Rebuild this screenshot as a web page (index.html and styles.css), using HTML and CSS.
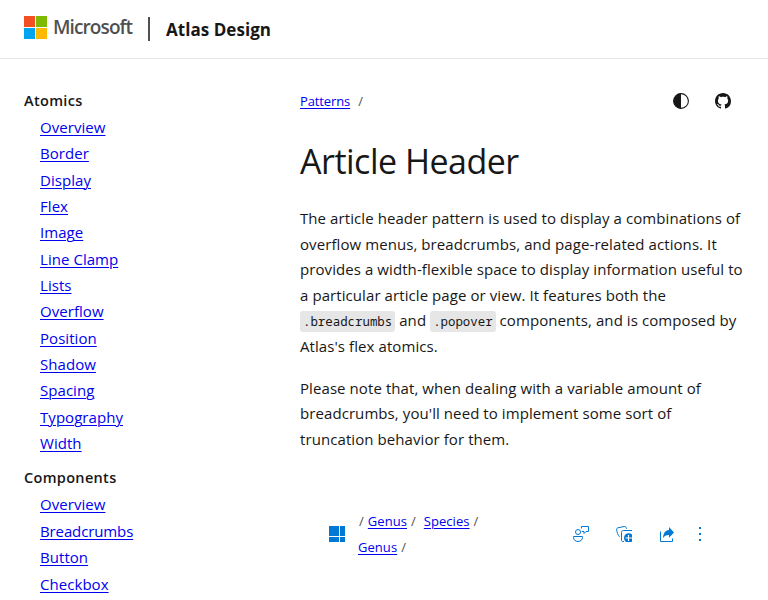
FILE: index.html
```html
<!DOCTYPE html>
<html lang="en">
<head>
<meta charset="utf-8">
<title>Article Header - Atlas Design</title>
<link rel="stylesheet" href="styles.css">
</head>
<body>
<header class="site-header">
  <a class="brand">
    <svg width="23" height="23" viewBox="0 0 23 23"><path fill="#f25022" d="M0 0h11v11H0z"/><path fill="#7fba00" d="M12 0h11v11H12z"/><path fill="#00a4ef" d="M0 12h11v11H0z"/><path fill="#ffb900" d="M12 12h11v11H12z"/></svg>
    <span class="brand-name">Microsoft</span>
  </a>
  <span class="divider"></span>
  <span class="site-name">Atlas Design</span>
</header>
<div class="layout">
  <nav class="sidebar">
    <h2>Atomics</h2>
    <ul>
      <li><a href="#">Overview</a></li>
      <li><a href="#">Border</a></li>
      <li><a href="#">Display</a></li>
      <li><a href="#">Flex</a></li>
      <li><a href="#">Image</a></li>
      <li><a href="#">Line Clamp</a></li>
      <li><a href="#">Lists</a></li>
      <li><a href="#">Overflow</a></li>
      <li><a href="#">Position</a></li>
      <li><a href="#">Shadow</a></li>
      <li><a href="#">Spacing</a></li>
      <li><a href="#">Typography</a></li>
      <li><a href="#">Width</a></li>
    </ul>
    <h2>Components</h2>
    <ul>
      <li><a href="#">Overview</a></li>
      <li><a class="tight" href="#">Breadcrumbs</a></li>
      <li><a href="#">Button</a></li>
      <li><a href="#">Checkbox</a></li>
    </ul>
  </nav>
  <main class="content">
    <div class="topbar">
      <div class="crumbs"><a href="#">Patterns</a><span class="slash">/</span></div>
      <div class="tools">
        <svg width="16" height="16" viewBox="0 0 16 16"><circle cx="8" cy="8" r="7.4" fill="none" stroke="#171717" stroke-width="1.1"/><path fill="#171717" d="M8 .6a7.4 7.4 0 0 0 0 14.800z"/></svg>
        <svg width="16" height="16" viewBox="0 0 16 16"><path fill="#171717" d="M8 0C3.580 0 0 3.580 0 8c0 3.540 2.290 6.530 5.470 7.590.4.070.55-.17.55-.38 0-.19-.01-.82-.01-1.490-2.010.37-2.530-.49-2.690-.94-.09-.23-.48-.94-.82-1.130-.28-.15-.68-.52-.01-.53.63-.01 1.080.58 1.230.82.72 1.210 1.870.87 2.330.66.070-.52.28-.87.51-1.070-1.780-.2-3.640-.89-3.640-3.950 0-.87.31-1.590.82-2.150-.08-.2-.36-1.020.080-2.120 0 0 .67-.21 2.200.82.640-.18 1.320-.27 2-.27s1.360.09 2 .27c1.530-1.040 2.200-.82 2.200-.82.440 1.100.16 1.920.080 2.120.51.56.82 1.270.82 2.150 0 3.070-1.870 3.750-3.650 3.950.29.25.54.73.54 1.480 0 1.070-.01 1.930-.01 2.200 0 .21.150.46.55.38A8.010 8.010 0 0 0 16 8c0-4.420-3.580-8-8-8z"/></svg>
      </div>
    </div>
    <h1>Article Header</h1>
    <p>
      <span class="line">The article header pattern is used to display a combinations of</span>
      <span class="line">overflow menus, breadcrumbs, and page-related actions. It</span>
      <span class="line">provides a width-flexible space to display information useful to</span>
      <span class="line">a particular article page or view. It features both the</span>
      <span class="line"><code>.breadcrumbs</code> and <code>.popover</code> components, and is composed by</span>
      <span class="line">Atlas's flex atomics.</span>
    </p>
    <p>
      <span class="line">Please note that, when dealing with a variable amount of</span>
      <span class="line">breadcrumbs, you'll need to implement some sort of</span>
      <span class="line">truncation behavior for them.</span>
    </p>
    <div class="article-header">
      <svg class="grid-icon" width="16" height="16" viewBox="0 0 16 16"><path fill="#0078d4" d="M0 0h10v10H0zM11 0h5v10h-5zM0 11h10v5H0zM11 11h5v5h-5z"/></svg>
      <div class="example-crumbs">
        <div class="row"><span>/</span><a href="#">Genus</a><span>/</span><a class="species" href="#">Species</a><span>/</span></div>
        <div class="row second"><a href="#">Genus</a><span>/</span></div>
      </div>
      <div class="actions">
        <svg width="16" height="16" viewBox="0 0 16 16" fill="none" stroke="#0078d4"><circle cx="5" cy="6" r="2.500"/><path d="M.5 10.500h9v1c0 2.300-2 4-4.500 4s-4.500-1.700-4.500-4zM8.500 2.500V.5h7v5H13l-2 2V5.500H8.800"/></svg>
        <svg width="16" height="16" viewBox="0 0 16 16"><path fill="none" stroke="#0078d4" d="M3.500 10.800C2 9.500 1 6 .6 3.800.4 2.700 1 2 2 1.800l6.200-1.300c1-.2 1.800.3 2.100 1.300l.2 1M8 15.500H7c-1 0-1.500-.6-1.500-1.500V6.500c0-1.200.6-2 1.900-2H16"/><circle cx="12.800" cy="12" r="4.800" fill="#0078d4"/><path d="M12.500 9v6M9.500 12h6.500" stroke="#fff" stroke-width="1.200"/></svg>
        <svg width="16" height="16" viewBox="0 0 16 16"><path d="M1.500 5.500v10H13.500V12.500" fill="none" stroke="#0078d4"/><path fill="#0078d4" d="M10 1l5 5.500-5 5.200V9C7.500 8.800 5.500 9.800 4 12.300 4.200 7.500 6 4.300 10 3.900z"/></svg>
        <svg class="more" width="4" height="16" viewBox="0 0 4 16" fill="#0078d4"><path d="M1 1h2v2H1zM1 7h2v2H1zM1 13h2v2H1z"/></svg>
      </div>
    </div>
  </main>
</div>
</body>
</html>
```
FILE: styles.css
```css
* { box-sizing: border-box; }
body { margin: 0; height: 600px; overflow: hidden; background: #fff; color: #171717; font: 400 15px/25.6px "Open Sans", "Noto Sans", sans-serif; }
a[href] { color: #0000ee; text-decoration: underline; text-decoration-thickness: 1px; text-underline-offset: 2px; }
svg { display: block; flex: none; }
.site-header { display: flex; height: 59px; padding: 16px 24px; border-bottom: 1px solid #e6e6e6; }
.brand { display: flex; gap: 6px; width: 108px; color: #505050; }
.brand-name { font-size: 19px; font-weight: 600; line-height: 23px; letter-spacing: -.9px; }
.divider { width: 2px; height: 24px; margin: 1px 16px 0; background: #505050; }
.site-name { font-size: 17px; font-weight: 700; line-height: 28px; letter-spacing: .05px; }
.layout { display: grid; grid-template-columns: 300px 1fr; }
.sidebar { padding: 28px 24px 0; white-space: nowrap; }
.sidebar ul { list-style: none; margin: 0 0 8px; padding: 0 0 0 16px; }
.sidebar li { height: 26.350px; line-height: 26.350px; letter-spacing: .05px; }
.sidebar h2 { margin: 0; font-size: 14.500px; font-weight: 600; line-height: 27px; letter-spacing: .32px; }
.sidebar .tight { letter-spacing: -.12px; }
.content { padding: 29px 24px 0 0; }
.topbar { display: flex; justify-content: space-between; height: 26px; }
.crumbs { font-size: 13px; line-height: 26px; letter-spacing: -.12px; }
.slash { margin-left: 8px; color: #505050; }
.tools { display: flex; gap: 26px; padding: 5px 13px 0 0; }
h1 { margin: 21px 0 19px; font-size: 34px; line-height: 52px; font-weight: 400; letter-spacing: -.5px; }
p { margin: 0 0 16px; }
.line { display: block; white-space: nowrap; height: 25.600px; letter-spacing: .08px; }
code { padding: 2px 3px; border-radius: 3px; background: #e6e6e6; font: 12.400px "Noto Sans Mono", "DejaVu Sans Mono", monospace; letter-spacing: 0; }
.article-header { display: flex; padding: 40px 20px 0 29px; }
.grid-icon { margin-top: 18px; }
.example-crumbs { margin-left: 14px; width: 149px; font-size: 13px; }
.row { display: flex; gap: 4px; height: 26px; line-height: 26px; color: #505050; white-space: nowrap; letter-spacing: .05px; }
.second { margin-left: -1px; }
.species { margin-left: 4px; }
.actions { display: flex; margin-left: 65px; padding-top: 18px; gap: 27px; }
.more { margin-left: -4px; }
```
